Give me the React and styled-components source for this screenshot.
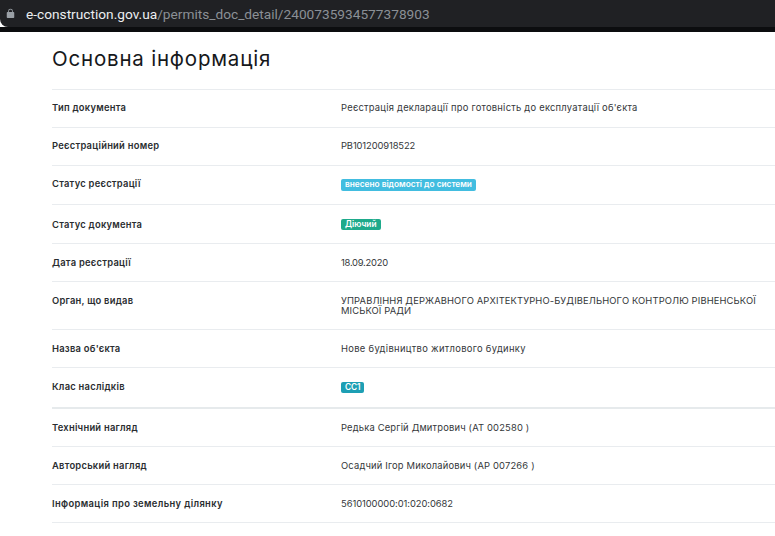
import React from 'react';
import styled, { createGlobalStyle } from 'styled-components';

const Global = createGlobalStyle`
  html, body { margin: 0; padding: 0; background: #fff; overflow: hidden; }
  body { font-family: Inter, "Liberation Sans", sans-serif; }
`;
const Page = styled.div`width: 775px; height: 536px; overflow: hidden; background: #fff;`;
const AddressBar = styled.div`
  height: 27px; background: #202124; border-radius: 0 0 0 8px; display: flex; align-items: center;
  padding-left: 6px; gap: 11px; box-sizing: border-box;
`;
const Strip = styled.div`height: 5px; background: #0c0d0f;`;
const Url = styled.div`font: 13.7px "Roboto", "Liberation Sans", sans-serif; color: #8b9096; white-space: nowrap;`;
const Host = styled.span`color: #eceef0;`;
const Content = styled.main`padding-left: 52px;`;
const Title = styled.h1`
  margin: 0; font: 400 20.5px/26px Inter, sans-serif; color: #16181b; height: 57px; box-sizing: border-box;
  padding-top: 14px; letter-spacing: 0.8px;
`;
const Row = styled.div`
  display: grid; grid-template-columns: 289px 1fr; align-items: start; box-sizing: border-box;
  height: ${p => p.$h}px; padding-top: ${p => p.$pt}px;
  border-top: ${p => p.$thick ? 2 : 1}px solid ${p => p.$thick ? '#e6eaec' : '#e9ecef'};
`;
const Last = styled.div`border-top: 1px solid #e9ecef;`;
const Label = styled.div`font: 600 9.4px/11px Inter, sans-serif; color: #2a2d30; letter-spacing: ${p => p.$wide ? 0.36 : 0.25}px;`;
const Value = styled.div`
  font: 400 9.4px/10px Inter, sans-serif; color: #34373a; letter-spacing: ${p => p.$ls}px;
  padding-top: 1px;
`;
const BadgeCell = styled.div`line-height: 0;`;
const Badge = styled.span`
  display: inline-block; background: ${p => p.$c}; color: #fff; font: 600 8.3px/11px Inter, sans-serif;
  padding: 0 4px; border-radius: 2px; height: ${p => p.$bh || 11}px; vertical-align: top; letter-spacing: ${p => p.$ls}px;
  margin-top: ${p => p.$mt}px;
`;
const Lock = () => (
  <svg width="9" height="11" viewBox="0 0 12 14" fill="#9aa0a6" aria-hidden="true">
    <path d="M2 5h.9V3.7a3.1 3.1 0 0 1 6.2 0V5h.9c.5 0 1 .4 1 1v6c0 .6-.5 1-1 1H2c-.5 0-1-.4-1-1V6c0-.6.5-1 1-1zm2-.1h4V3.7a2 2 0 0 0-4 0z" />
  </svg>
);
const rows = [
  { l: 'Тип документа', v: 'Реєстрація декларації про готовність до експлуатації об\'єкта', h: 38, pt: 12, ls: 0.24 },
  { l: 'Реєстраційний номер', v: 'РВ101200918522', h: 38, pt: 12, ls: -0.12 },
  { l: 'Статус реєстрації', b: { c: '#42bde0', mt: 1, ls: 0, bh: 12, t: 'внесено відомості до системи' }, h: 39, pt: 12 },
  { l: 'Статус документа', b: { c: '#1eaa8b', mt: 0, ls: 0, t: 'Діючий' }, h: 39, pt: 14 },
  { l: 'Дата реєстрації', v: '18.09.2020', h: 38, pt: 13, ls: -0.25 },
  { l: 'Орган, що видав', v: 'УПРАВЛІННЯ ДЕРЖАВНОГО АРХІТЕКТУРНО-БУДІВЕЛЬНОГО КОНТРОЛЮ РІВНЕНСЬКОЇ МІСЬКОЇ РАДИ', h: 48, pt: 13, ls: 0.13 },
  { l: 'Назва об\'єкта', v: 'Нове будівництво житлового будинку', h: 38, pt: 13, ls: 0.32 },
  { l: 'Клас наслідків', b: { c: '#1d9fb4', mt: 1, ls: -0.1, t: 'СС1' }, h: 40, pt: 13 },
  { l: 'Технічний нагляд', v: 'Редька Сергій Дмитрович (АТ 002580 )', h: 39, pt: 13, ls: 0.17, thick: true },
  { l: 'Авторський нагляд', v: 'Осадчий Ігор Миколайович (АР 007266 )', h: 38, pt: 13, ls: 0.17 },
  { l: 'Інформація про земельну ділянку', v: '5610100000:01:020:0682', h: 38, pt: 13, ls: -0.06, wide: true },
];
export default function App() {
  return (
    <Page>
      <Global />
      <AddressBar>
        <Lock />
        <Url><Host>e-construction.gov.ua</Host>/permits_doc_detail/2400735934577378903</Url>
      </AddressBar>
      <Strip />
      <Content>
        <Title>Основна інформація</Title>
        {rows.map(r => (
          <Row key={r.l} $h={r.h} $pt={r.pt} $thick={r.thick}>
            <Label $wide={r.wide}>{r.l}</Label>
            {r.b
              ? <BadgeCell><Badge $c={r.b.c} $mt={r.b.mt} $ls={r.b.ls} $bh={r.b.bh}>{r.b.t}</Badge></BadgeCell>
              : <Value $ls={r.ls}>{r.v}</Value>}
          </Row>
        ))}
        <Last />
      </Content>
    </Page>
  );
}
